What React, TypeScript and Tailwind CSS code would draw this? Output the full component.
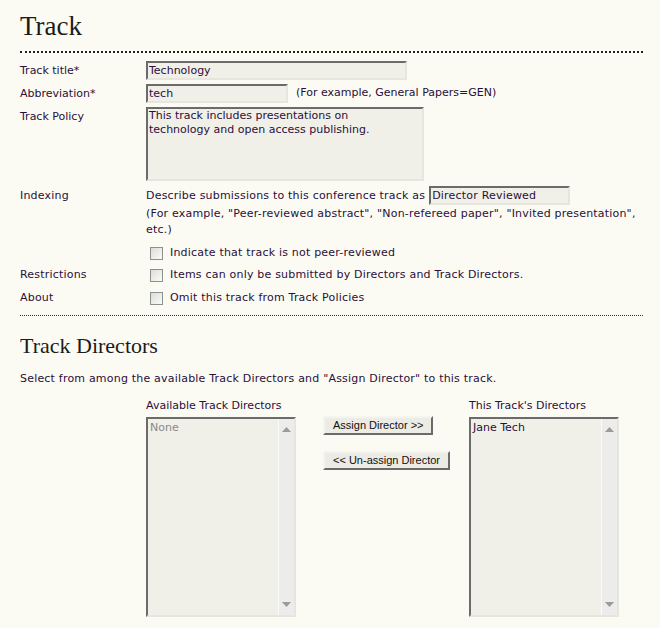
const verdana = "font-['DejaVu_Sans',Verdana,sans-serif] text-[11px]";
const tahoma = "font-['DejaVu_Sans',Tahoma,sans-serif] text-[11px] tracking-[0.2px]";
const arial = "font-['Liberation_Sans',Arial,sans-serif] text-[11px]";
const inset =
  "border-2 border-t-[#6b6b6b] border-l-[#6b6b6b] border-r-[#e6e6de] border-b-[#e6e6de] bg-[#f0efe8] text-[#2a0f3a] outline-none";

const Checkbox = () => (
  <span className="ml-[4px] mr-[7px] inline-block h-[13px] w-[13px] shrink-0 border border-[#8e8f8f] bg-gradient-to-br from-[#dcdcd7] to-[#fbfbf8]" />
);

const Row = ({ label, children }: { label?: string; children: React.ReactNode }) => (
  <div className="grid grid-cols-[126px_1fr] items-start">
    <div className={`${verdana} pt-[2px] text-[#2a0f3a]`}>{label}</div>
    <div>{children}</div>
  </div>
);

const ListBox = ({ item, muted }: { item: string; muted?: boolean }) => (
  <div className={`${inset} flex h-[200px] w-[150px]`}>
    <div className={`${verdana} flex-1 px-[2px] pt-[1px] ${muted ? "text-[#8a8a8a]" : "text-[#2a0f3a]"}`}>
      {item}
    </div>
    <div className="flex w-[16px] flex-col items-center justify-between border-l border-[#fafafa] bg-[#ececea] py-[8px]">
      <svg width="9" height="5" viewBox="0 0 9 5">
        <path d="M4.5 0 L9 5 L0 5 Z" fill="#9a9a9a" />
      </svg>
      <svg width="9" height="5" viewBox="0 0 9 5">
        <path d="M0 0 L9 0 L4.5 5 Z" fill="#9a9a9a" />
      </svg>
    </div>
  </div>
);

const Button = ({ children }: { children: React.ReactNode }) => (
  <button
    className={`${arial} h-[19px] border-2 border-t-[#f4f4f0] border-l-[#f4f4f0] border-r-[#6b6b6b] border-b-[#6b6b6b] bg-[#ecebe4] px-[8px] leading-none text-[#111]`}
  >
    {children}
  </button>
);

export default function App() {
  return (
    <div className="min-h-[628px] bg-[#fbfbf3] pl-[20px] pr-[17px] pt-[10px] text-[#2a0f3a]">
      <h1 className="font-['Liberation_Serif',Georgia,serif] text-[27px] leading-[32px] text-[#1b1b1b]">
        Track
      </h1>
      <div className="mt-[9px] border-b-2 border-dotted border-[#222]" />

      <div className="mt-[8px] flex flex-col">
        <Row label="Track title*">
          <input readOnly value="Technology" className={`${inset} ${verdana} block h-[19px] w-[261px] px-[1px]`} />
        </Row>
        <div className="mt-[4px]">
          <Row label="Abbreviation*">
            <div className="flex items-center">
              <input readOnly value="tech" className={`${inset} ${verdana} block h-[19px] w-[142px] px-[1px]`} />
              <span className={`${verdana} ml-[8px]`}>(For example, General Papers=GEN)</span>
            </div>
          </Row>
        </div>
        <div className="mt-[4px]">
          <Row label="Track Policy">
            <textarea
              readOnly
              value={"This track includes presentations on\ntechnology and open access publishing."}
              className={`${inset} ${verdana} block h-[74px] w-[278px] resize-none px-[1px] leading-[14px]`}
            />
          </Row>
        </div>
        <div className="mt-[5px]">
          <div className="grid grid-cols-[126px_1fr] items-start">
            <div className={`${tahoma} pt-[2px]`}>Indexing</div>
            <div className={`${tahoma} leading-[16px]`}>
              <div className="flex items-center">
                <span>Describe submissions to this conference track as</span>
                <input
                  readOnly
                  value="Director Reviewed"
                  className={`${inset} ${tahoma} ml-[4px] block h-[19px] w-[141px] px-[1px]`}
                />
              </div>
              <div className="mt-[1px]">
                (For example, "Peer-reviewed abstract", "Non-refereed paper", "Invited presentation",
                <br />
                etc.)
              </div>
              <div className="mt-[4px] flex h-[22px] items-center">
                <Checkbox />
                <span>Indicate that track is not peer-reviewed</span>
              </div>
            </div>
          </div>
        </div>
        <div className="grid grid-cols-[126px_1fr] items-center">
          <div className={tahoma}>Restrictions</div>
          <div className={`${tahoma} flex h-[23px] items-center`}>
            <Checkbox />
            <span>Items can only be submitted by Directors and Track Directors.</span>
          </div>
        </div>
        <div className="grid grid-cols-[126px_1fr] items-center">
          <div className={tahoma}>About</div>
          <div className={`${tahoma} flex h-[22px] items-center`}>
            <Checkbox />
            <span>Omit this track from Track Policies</span>
          </div>
        </div>
      </div>

      <div className="mt-[6px] border-b border-dotted border-[#333]" />

      <h2 className="mt-[17px] font-['Liberation_Serif',Georgia,serif] text-[22px] leading-[26px] text-[#1b1b1b]">
        Track Directors
      </h2>
      <p className={`${tahoma} mt-[12px]`}>
        Select from among the available Track Directors and "Assign Director" to this track.
      </p>

      <div className="mt-[10px] grid grid-cols-[126px_177px_146px_auto]">
        <div />
        <div>
          <div className={`${verdana} mb-[3px]`}>Available Track Directors</div>
          <ListBox item="None" muted />
        </div>
        <div className="flex flex-col items-start gap-[16px] pt-[18px]">
          <Button>Assign Director &gt;&gt;</Button>
          <Button>&lt;&lt; Un-assign Director</Button>
        </div>
        <div>
          <div className={`${verdana} mb-[3px]`}>This Track's Directors</div>
          <ListBox item="Jane Tech" />
        </div>
      </div>
    </div>
  );
}
